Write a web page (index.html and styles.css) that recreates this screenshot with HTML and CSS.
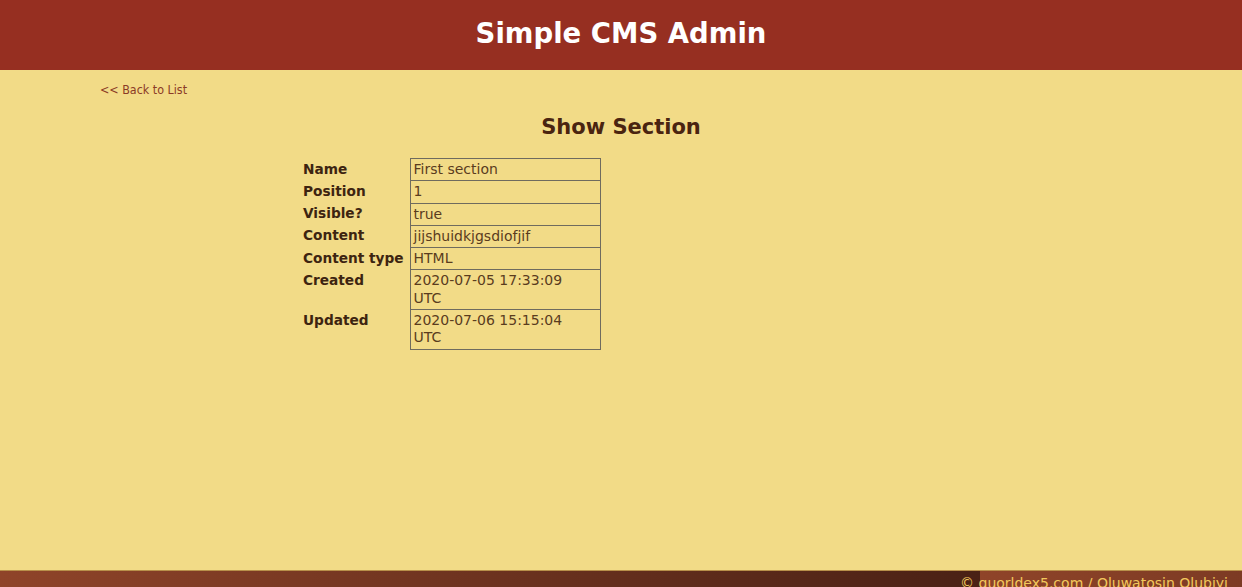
FILE: index.html
```html
<!DOCTYPE html>
<html lang="en">
<head>
<meta charset="utf-8">
<title>Simple CMS Admin</title>
<link rel="stylesheet" href="styles.css">
</head>
<body>
<header class="site-header">
  <h1 class="site-title">Simple CMS Admin</h1>
</header>
<main class="main">
  <a class="back-link" href="#">&lt;&lt; Back to List</a>
  <h2 class="page-title">Show Section</h2>
  <table class="attributes">
    <colgroup>
      <col class="col-label">
      <col class="col-value">
    </colgroup>
    <tr><th>Name</th><td>First section</td></tr>
    <tr><th>Position</th><td>1</td></tr>
    <tr><th>Visible?</th><td>true</td></tr>
    <tr><th>Content</th><td>jijshuidkjgsdiofjif</td></tr>
    <tr><th>Content type</th><td>HTML</td></tr>
    <tr><th>Created</th><td>2020-07-05 17:33:09 UTC</td></tr>
    <tr><th>Updated</th><td>2020-07-06 15:15:04 UTC</td></tr>
  </table>
</main>
<footer class="site-footer">
  <p class="copyright">&copy; guorldex5.com / Oluwatosin Olubiyi</p>
</footer>
</body>
</html>
```

FILE: styles.css
```css
html, body {
  margin: 0;
  padding: 0;
}

body {
  background: #f2db87;
  font-family: "DejaVu Sans", Verdana, sans-serif;
  color: #3f2412;
}

.site-header {
  background: #962f21;
  height: 70px;
}

.site-title {
  margin: 0;
  text-align: center;
  color: #ffffff;
  font-size: 27.5px;
  font-weight: bold;
  line-height: 66px;
}

.main {
  height: 500px;
  box-sizing: border-box;
  padding: 13px 0 0 100px;
}

.back-link {
  display: block;
  width: max-content;
  font-family: "DejaVu Sans Condensed", "DejaVu Sans", sans-serif;
  font-stretch: condensed;
  font-size: 12.4px;
  line-height: 14px;
  color: #8b3a26;
  text-decoration: none;
}

.page-title {
  margin: 18px 0 0 -100px;
  text-align: center;
  font-size: 21px;
  line-height: 25px;
  font-weight: bold;
  color: #4a2410;
}

.attributes {
  margin: 18px 0 0 200px;
  border-collapse: collapse;
  table-layout: fixed;
  width: 300px;
  font-size: 14px;
  line-height: 17.3px;
}

.col-label {
  width: 110px;
}

.col-value {
  width: 190px;
}

.attributes th,
.attributes td {
  padding: 2px 3px;
  vertical-align: top;
  text-align: left;
}

.attributes th {
  font-weight: bold;
  font-size: 13.7px;
  color: #3d2410;
  white-space: nowrap;
}

.attributes td {
  border: 1px solid #6f6b5e;
  padding-right: 14px;
  color: #5a3c1e;
}

.site-footer {
  border-top: 1px solid #b8904a;
  background: linear-gradient(to right, #8f4429, #4a2115) 0 0 / 980px 100% repeat-x;
  padding: 4px 14px 8px;
}

.copyright {
  margin: 0;
  text-align: right;
  font-size: 14px;
  line-height: 17px;
  color: #f2c85c;
}
```
